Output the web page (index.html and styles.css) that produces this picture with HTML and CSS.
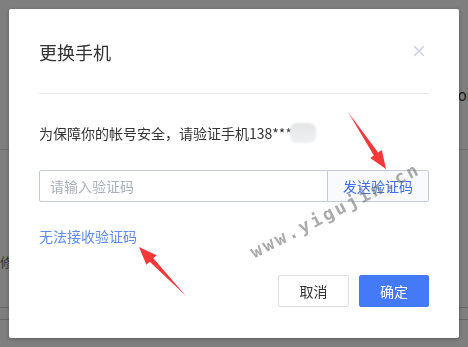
FILE: index.html
```html
<!DOCTYPE html>
<html lang="zh">

<head>
    <meta charset="utf-8">
    <meta name="viewport" content="width=device-width, initial-scale=1.0">
    <title>更换手机</title>
    <link rel="stylesheet" href="styles.css">
</head>

<body>

    <div class="side">
        <div class="side_top"><span class="side_word">ok</span></div>
        <div class="side_mid"><span class="side_left">修</span></div>
        <div class="side_line"></div>
        <div class="side_line"></div>
    </div>

    <div class="overlay">
        <div class="dialog">
            <div class="dialog_head">
                <h2 class="titel">更换手机</h2>
                <button class="luk" aria-label="关闭">
                    <svg width="12" height="12" viewBox="0 0 12 12">
                        <path d="M1 1L11 11M11 1L1 11" stroke="#c3d0df" stroke-width="1.3" fill="none" />
                    </svg>
                </button>
            </div>

            <p class="info">为保障你的帐号安全，请验证手机138****<span class="sloret"></span></p>

            <div class="kode">
                <input type="text" placeholder="请输入验证码">
                <button class="send">发送验证码</button>
            </div>

            <a class="hjaelp">无法接收验证码</a>

            <div class="knapper">
                <button class="fortryd">取消</button>
                <button class="ok">确定</button>
            </div>
        </div>
    </div>

    <div class="stempel">www.yigujin.cn</div>

    <svg class="pile" width="468" height="347" viewBox="0 0 468 347">
        <polygon points="348,112 378.1,152.6 381.8,150.1 386,169 370.2,157.9 373.9,155.4" fill="#f4383a" />
        <polygon points="186,296 153.3,258.3 156.6,255.2 139,247 146.4,264.8 149.7,261.7" fill="#f4383a" />
    </svg>

</body>

</html>
```

FILE: styles.css
```css
* {
    margin: 0;
    padding: 0;
    box-sizing: border-box;
}

body {
    width: 468px;
    height: 347px;
    overflow: hidden;
    background-color: #fff;
    font-family: "Noto Sans CJK SC", "Noto Sans", sans-serif;
    position: relative;
}

/* siden bag dialogen */
.side_top {
    height: 150px;
    border-bottom: 1px solid #ddd;
    text-align: right;
    padding-top: 84px;
    margin-right: -7px;
    font-size: 15px;
    color: #333;
}

.side_mid {
    height: 157px;
    padding-top: 102px;
    font-size: 13px;
    color: #666;
}

.side_line {
    height: 12px;
    border-top: 1px solid #ccc;
}

.overlay {
    position: fixed;
    top: 0;
    left: 0;
    right: 0;
    bottom: 0;
    background-color: rgba(0, 0, 0, .5);
    padding: 9px;
    display: flex;
}

.dialog {
    flex: 1;
    background-color: #fff;
    border-radius: 2px;
    box-shadow: 0 1px 4px rgba(0, 0, 0, .3);
    padding: 0 30px;
    display: flex;
    flex-direction: column;
}

.dialog_head {
    display: flex;
    justify-content: space-between;
    align-items: center;
    padding: 30px 0 28px;
    border-bottom: 1px solid #e8e8e8;
}

.titel {
    font-size: 18px;
    line-height: 26px;
    font-weight: normal;
    color: #333;
}

.luk {
    border: none;
    background: none;
    width: 12px;
    height: 12px;
    margin-right: 4px;
    margin-top: -3px;
    display: flex;
}

.info {
    margin-top: 29px;
    font-size: 14px;
    line-height: 20px;
    color: #333;
    display: flex;
    align-items: center;
}

.sloret {
    display: inline-block;
    width: 26px;
    height: 20px;
    margin-left: -8px;
    border-radius: 7px;
    background: linear-gradient(#e3e5e6, #eef0f1);
    filter: blur(1px);
}

.kode {
    display: flex;
    margin-top: 27px;
    height: 32px;
}

.kode input {
    flex: 1;
    border: 1px solid #c4cbd6;
    border-radius: 2px 0 0 2px;
    padding: 0 10px;
    font-family: inherit;
    font-size: 14px;
    color: #333;
    outline: none;
}

.kode input::placeholder {
    color: #a9b0bb;
}

.send {
    width: 101px;
    border: 1px solid #c4cbd6;
    border-left: none;
    border-radius: 0 2px 2px 0;
    background-color: #f8fafd;
    color: #3d6ff0;
    font-family: inherit;
    font-size: 14px;
}

.hjaelp {
    margin-top: 24px;
    font-size: 14px;
    line-height: 20px;
    color: #5b8cf7;
    cursor: pointer;
}

.knapper {
    display: flex;
    justify-content: flex-end;
    gap: 10px;
    margin-top: 29px;
}

.knapper button {
    height: 32px;
    border-radius: 2px;
    font-family: inherit;
    font-size: 14px;
    cursor: pointer;
}

.fortryd {
    width: 71px;
    background-color: #fff;
    border: 1px solid #dcdfe3;
    color: #333;
}

.ok {
    width: 70px;
    background-color: #4479f8;
    border: 1px solid #4479f8;
    color: #fff;
}

/* vandmaerke og pile ligger ovenpaa */
.stempel {
    position: absolute;
    left: 256px;
    top: 241px;
    font-family: "DejaVu Sans Mono", monospace;
    font-weight: bold;
    font-size: 18px;
    letter-spacing: 2.6px;
    color: rgba(100, 100, 100, .55);
    transform: rotate(-27deg);
    transform-origin: 0 100%;
    white-space: nowrap;
}

.pile {
    position: absolute;
    top: 0;
    left: 0;
}
```
